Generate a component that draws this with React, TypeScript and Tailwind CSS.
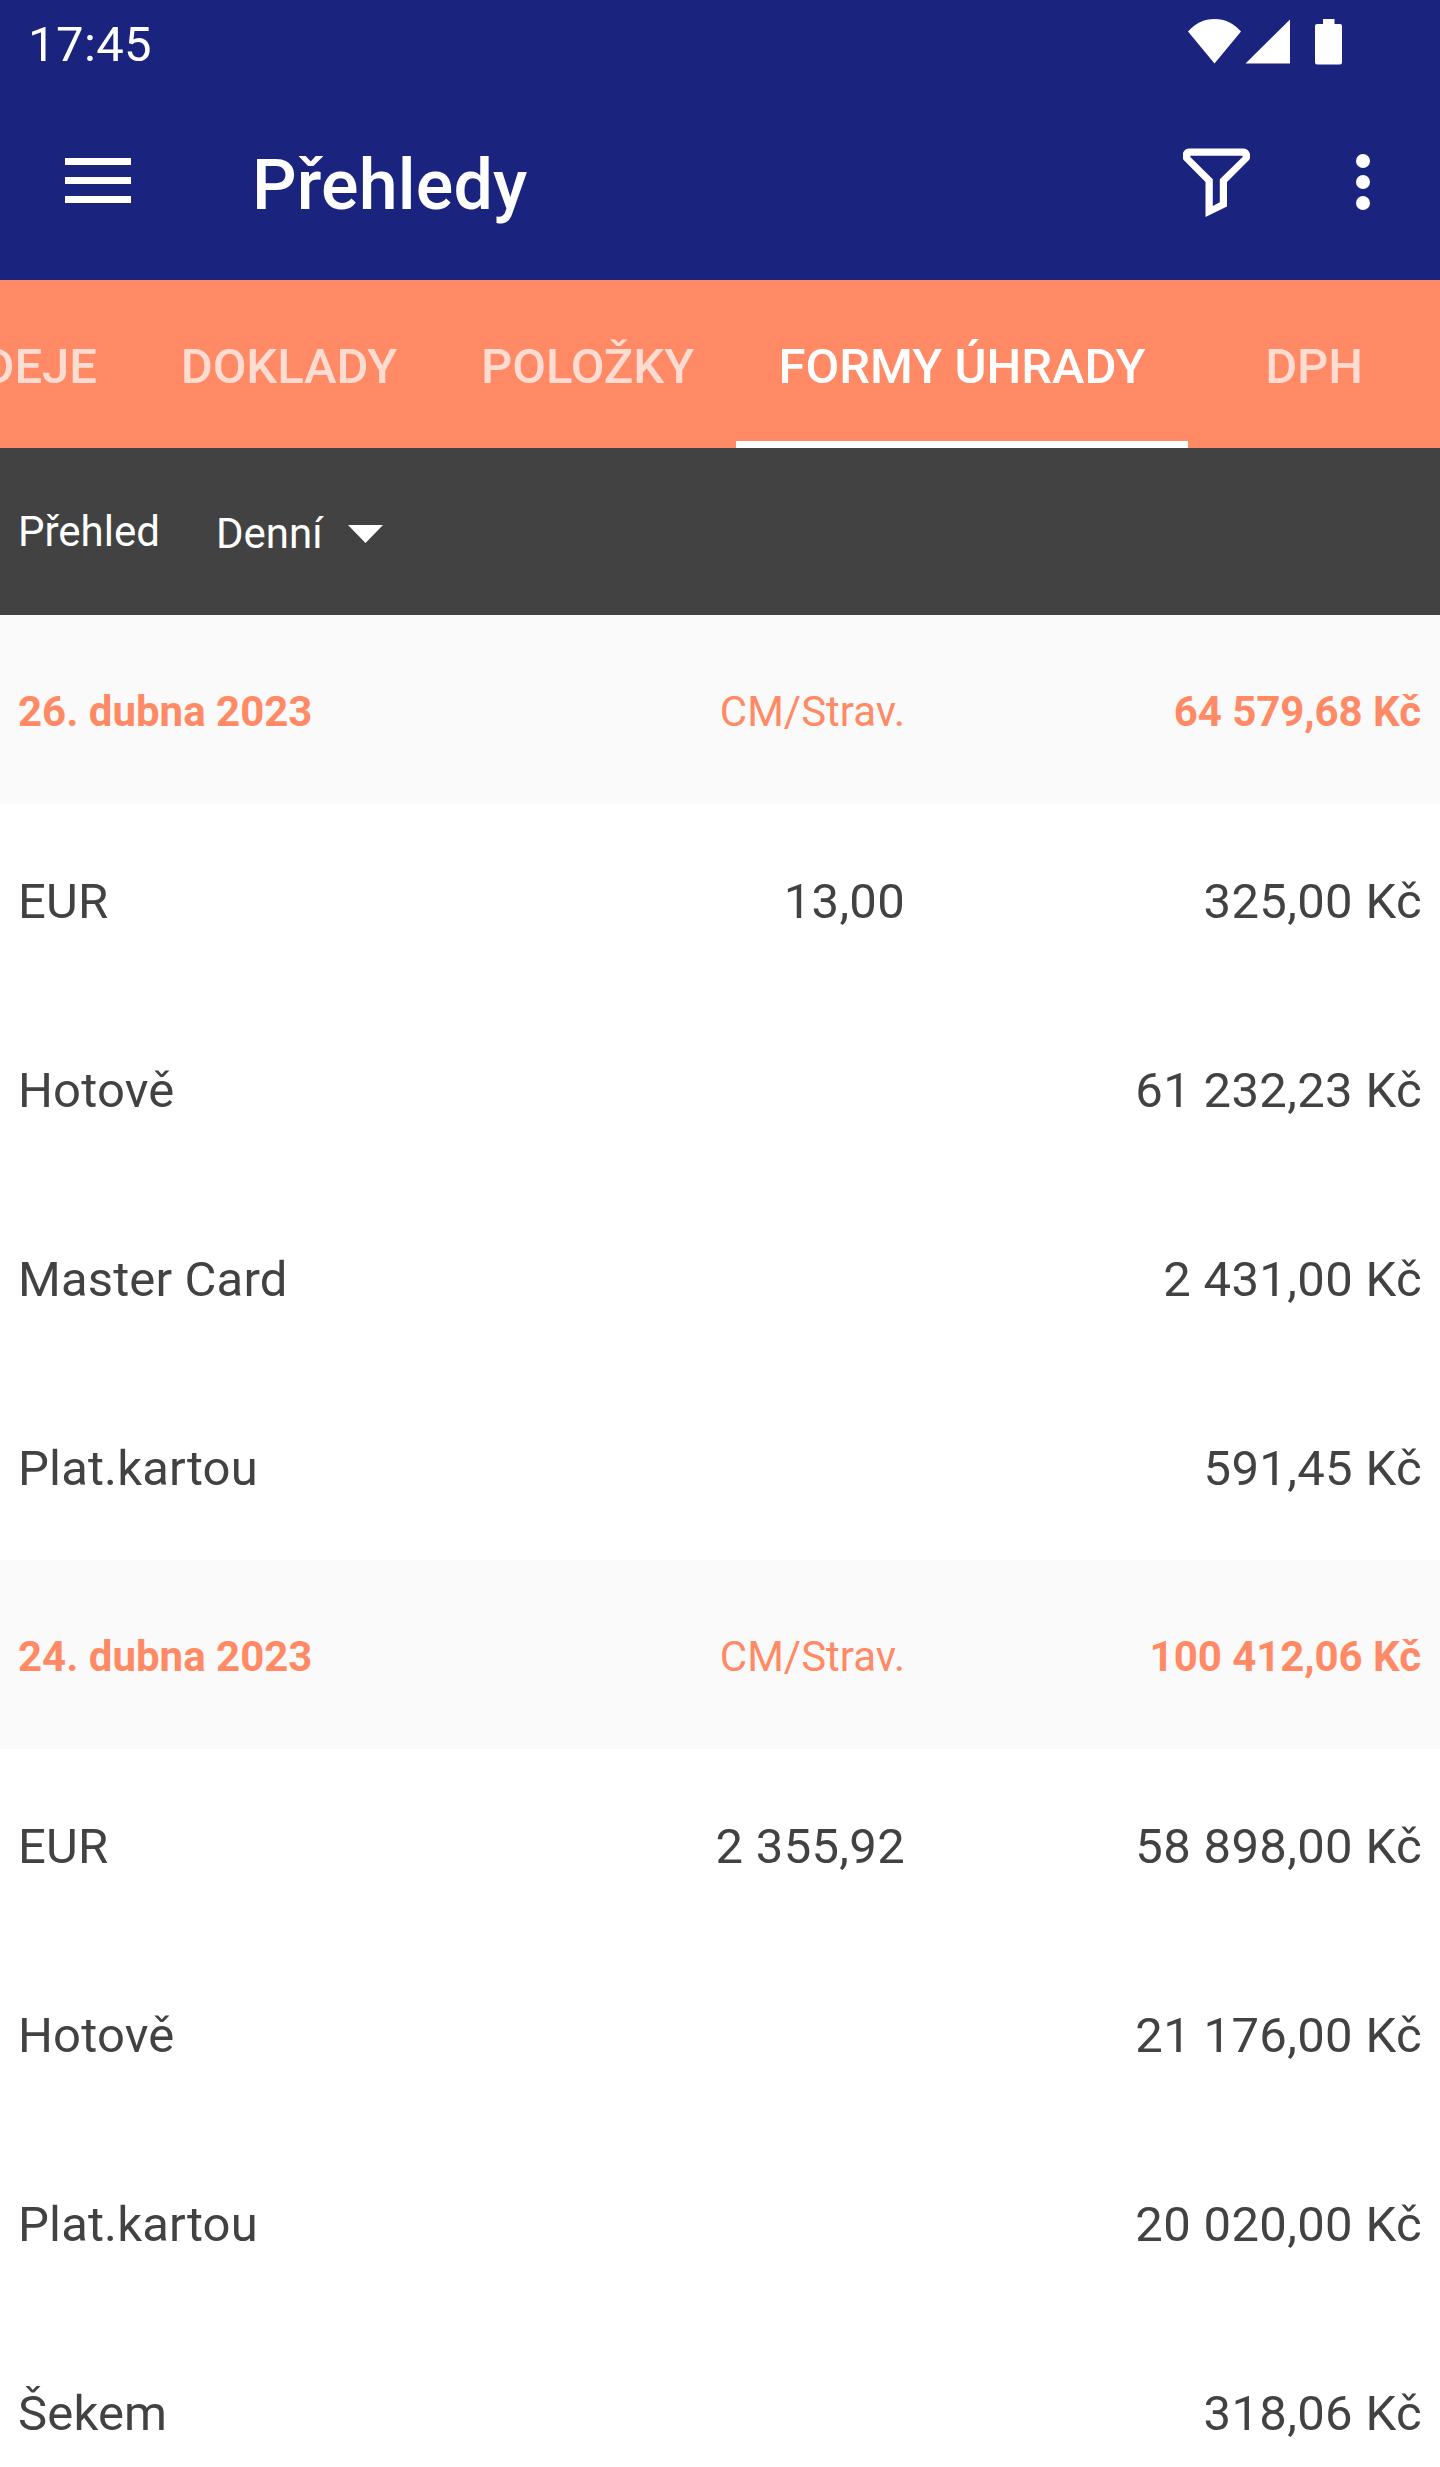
type Payment = {
  name: string;
  foreign?: string;
  amount: string;
};

type Day = {
  date: string;
  total: string;
  payments: Payment[];
};

const tabs = ["PRODEJE", "DOKLADY", "POLOŽKY", "FORMY ÚHRADY", "DPH"];
const activeTab = "FORMY ÚHRADY";

const days: Day[] = [
  {
    date: "26. dubna 2023",
    total: "64 579,68 Kč",
    payments: [
      { name: "EUR", foreign: "13,00", amount: "325,00 Kč" },
      { name: "Hotově", amount: "61 232,23 Kč" },
      { name: "Master Card", amount: "2 431,00 Kč" },
      { name: "Plat.kartou", amount: "591,45 Kč" },
    ],
  },
  {
    date: "24. dubna 2023",
    total: "100 412,06 Kč",
    payments: [
      { name: "EUR", foreign: "2 355,92", amount: "58 898,00 Kč" },
      { name: "Hotově", amount: "21 176,00 Kč" },
      { name: "Plat.kartou", amount: "20 020,00 Kč" },
      { name: "Šekem", amount: "318,06 Kč" },
    ],
  },
];

function StatusBar() {
  return (
    <div className="h-[84px] flex justify-between pl-[28px] pr-[98px]">
      <span className="text-[49px] leading-[57px] pt-[16px] tracking-[0.4px]">17:45</span>
      <svg width="154" height="84" viewBox="0 0 154 84" fill="currentColor">
        <path d="M0 31.5C7 23.5 16 19 26.5 19S46 23.5 53 31.5L26.5 63.5Z" />
        <path d="M57.5 63.5L102 19.5V63.5Z" />
        <path d="M135 24V19H146.5V24H152A2 2 0 0 1 154 26V62.5A2 2 0 0 1 152 64.5H129A2 2 0 0 1 127 62.5V26A2 2 0 0 1 129 24Z" />
      </svg>
    </div>
  );
}

function Toolbar() {
  return (
    <div className="h-[196px] flex items-center pl-[65px] pr-[70px]">
      <div className="w-[66px] flex flex-col gap-3 mb-[3px]">
        <span className="h-[7px] bg-white" />
        <span className="h-[7px] bg-white" />
        <span className="h-[7px] bg-white" />
      </div>
      <h1 className="ml-[121px] pt-[6px] text-[70px] leading-[82px] font-medium tracking-[0.15px]">
        Přehledy
      </h1>
      <svg
        className="ml-auto"
        width="67"
        height="69"
        viewBox="0 0 67 69"
        fill="currentColor"
        fillRule="evenodd"
      >
        <path d="M7.5 0.5H59.5A7.3 7.3 0 0 1 64.5 13.5L44 34V58.5L22.5 69V34L2.2 13.5A7.3 7.3 0 0 1 7.5 0.5ZM7.3 7.7V9L29.8 31.3V58L36.8 54.3V31.3L59.6 9V7.7Z" />
      </svg>
      <div className="ml-[106px] w-[14px] flex flex-col gap-[7px]">
        <span className="size-[14px] rounded-full bg-white" />
        <span className="size-[14px] rounded-full bg-white" />
        <span className="size-[14px] rounded-full bg-white" />
      </div>
    </div>
  );
}

function Tabs() {
  return (
    <nav className="h-[168px] bg-[#ff8a65] flex justify-end overflow-hidden text-[49px] leading-[57px] font-medium whitespace-nowrap">
      {tabs.map((tab) => (
        <div
          key={tab}
          className={
            tab === activeTab
              ? "shrink-0 w-[452px] pt-[4px] flex items-center justify-center text-white shadow-[inset_0_-7px_0_#fff]"
              : "shrink-0 min-w-[252px] px-[42px] pt-[4px] flex items-center justify-center text-white/70 -tracking-[0.1px]"
          }
        >
          {tab}
        </div>
      ))}
    </nav>
  );
}

function PeriodBar() {
  return (
    <div className="h-[167px] bg-[#424242] flex items-center pl-[18px] text-[42px] leading-[50px] text-white">
      <span>Přehled</span>
      <span className="ml-[56px] pt-[4px]">Denní</span>
      <svg className="ml-[25px] mt-[5px]" width="35" height="18" viewBox="0 0 35 18" fill="currentColor">
        <path d="M0 0H35L17.5 18Z" />
      </svg>
    </div>
  );
}

function DayGroup({ day }: { day: Day }) {
  return (
    <section>
      <div className="h-[189px] bg-[#fafafa] text-[#ff8a65] text-[42px] leading-[50px] flex items-center pl-[18px] pr-[19px] pt-[4px]">
        <span className="w-[443px] font-bold">{day.date}</span>
        <span className="w-[444px] text-right">CM/Strav.</span>
        <span className="flex-1 text-right font-bold -tracking-[0.05px]">{day.total}</span>
      </div>
      {day.payments.map((payment) => (
        <div
          key={payment.name}
          className="h-[189px] text-[#424242] text-[49px] leading-[57px] flex items-center pl-[18px] pr-[18px] pt-[6px]"
        >
          <span className="w-[443px] tracking-[0.15px]">{payment.name}</span>
          <span className="w-[444px] text-right tracking-[0.3px]">{payment.foreign}</span>
          <span className="flex-1 text-right tracking-[0.35px]">{payment.amount}</span>
        </div>
      ))}
    </section>
  );
}

export default function App() {
  return (
    <div className="w-[1440px] h-[2467px] overflow-hidden bg-white font-['Roboto',sans-serif]">
      <header className="bg-[#1a237e] text-white">
        <StatusBar />
        <Toolbar />
      </header>
      <Tabs />
      <PeriodBar />
      {days.map((day) => (
        <DayGroup key={day.date} day={day} />
      ))}
    </div>
  );
}
